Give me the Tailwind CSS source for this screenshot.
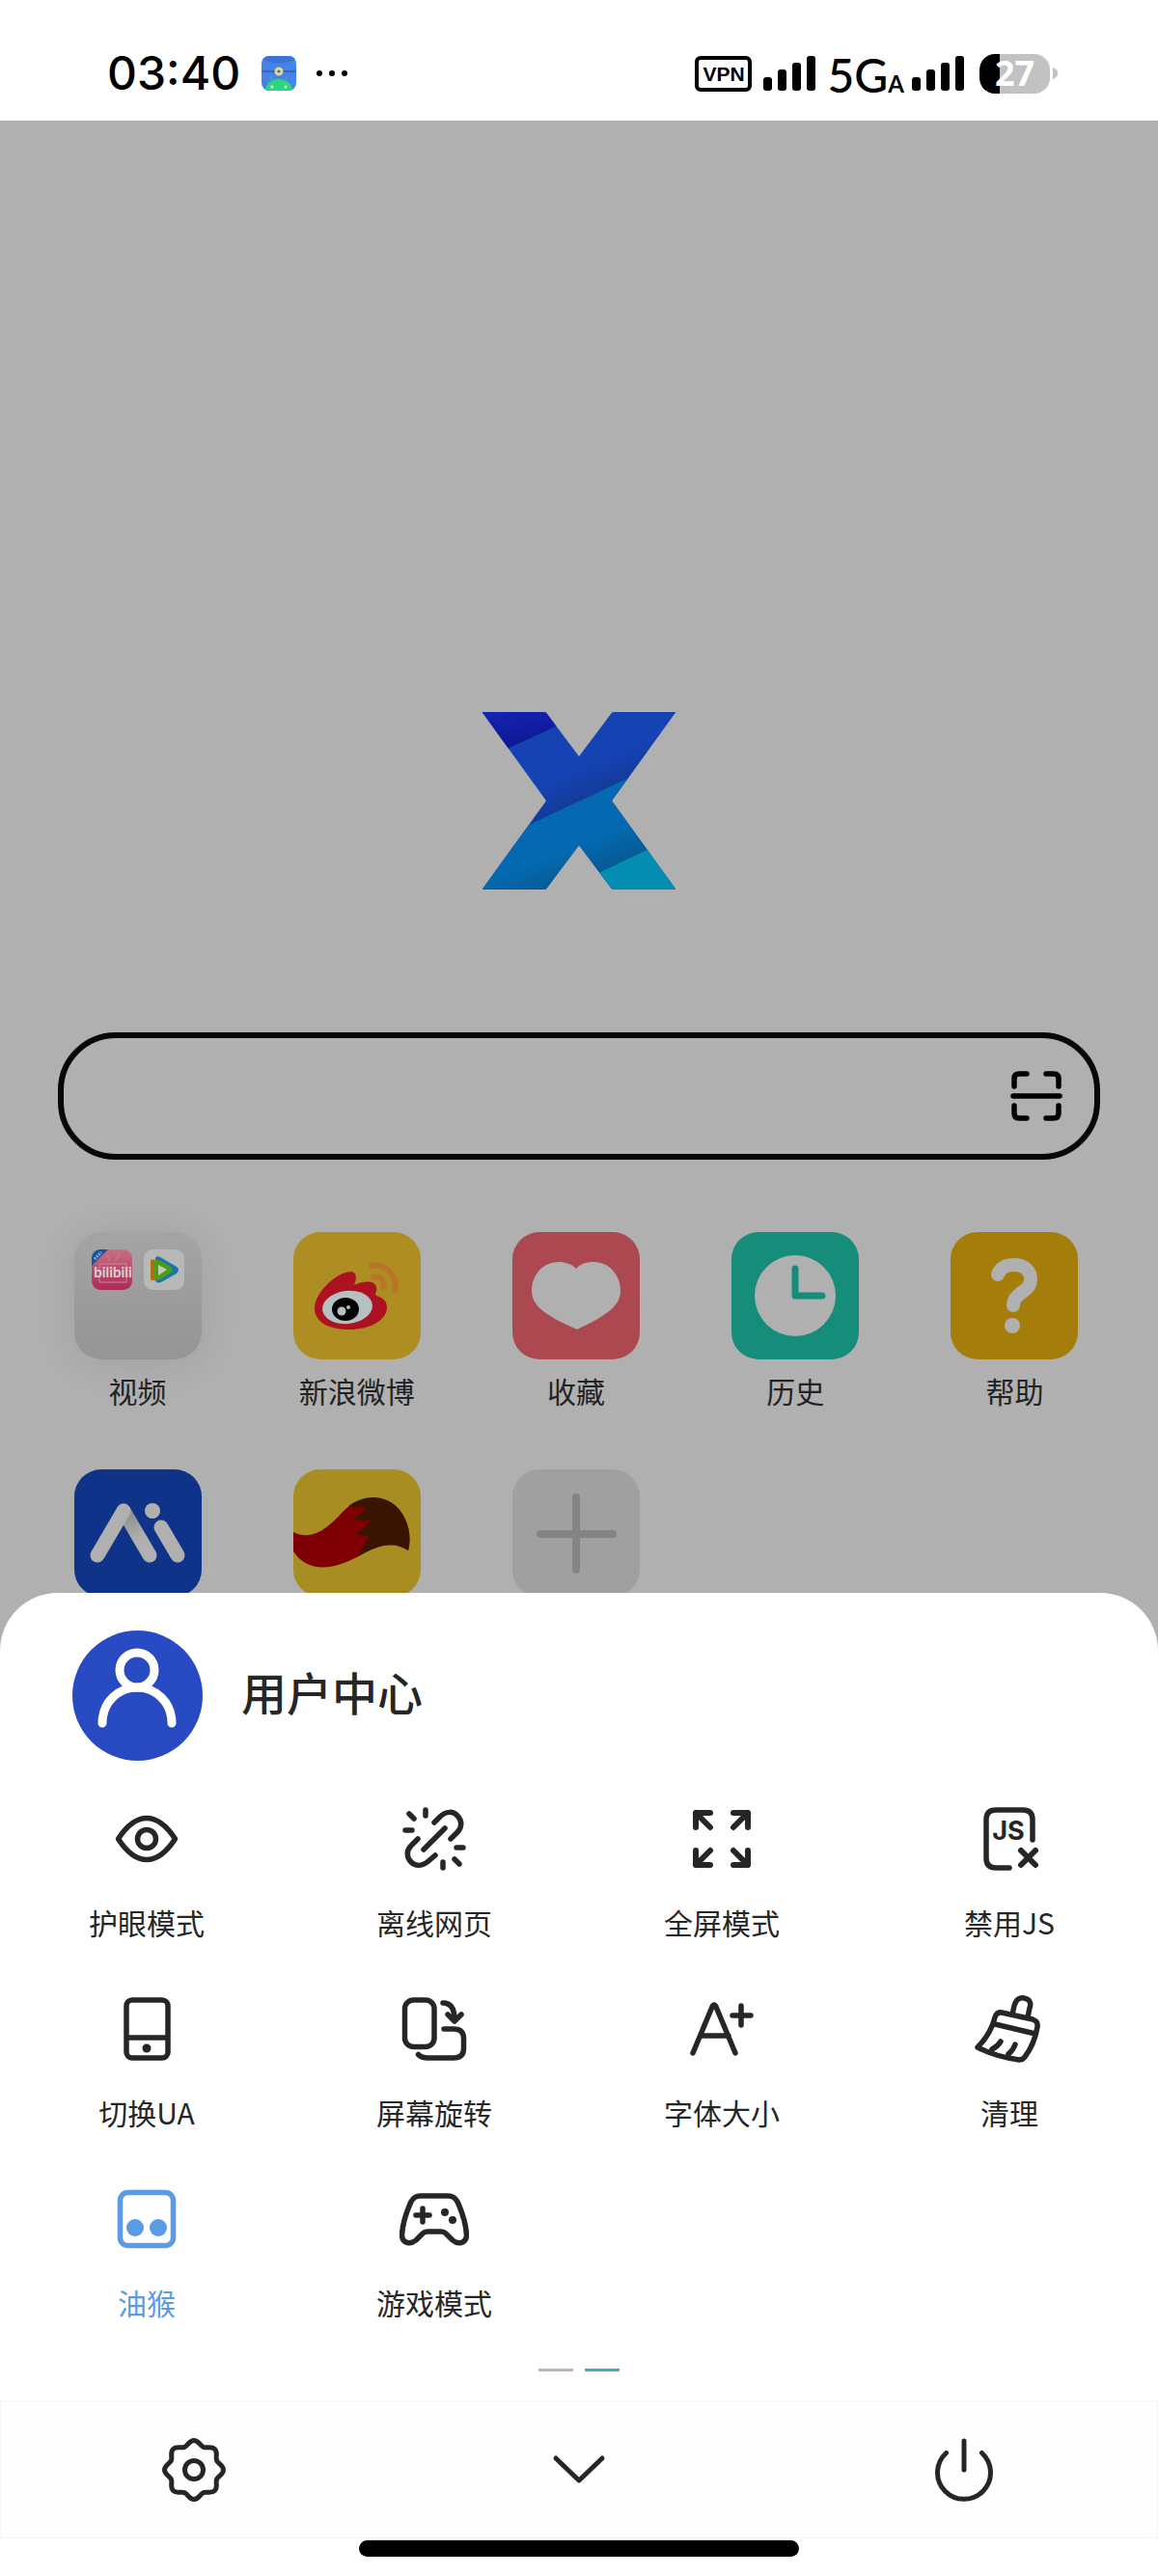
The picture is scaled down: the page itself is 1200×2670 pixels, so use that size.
<!DOCTYPE html>
<html lang="zh-CN">
<head>
<meta charset="utf-8">
<meta name="viewport" content="width=device-width, initial-scale=1">
<title>用户中心</title>
<script src="https://cdn.jsdelivr.net/npm/@tailwindcss/browser@4"></script>
</head>
<body class="relative flex min-h-screen flex-col overflow-x-hidden bg-[#b0b0b0] font-['Noto_Sans_CJK_SC',sans-serif] text-[#262626]">

<!-- Status bar -->
<header class="flex h-[125px] items-center bg-white pt-[27px] pr-[112px] pl-[111px] text-black">
  <time class="font-['Inter',sans-serif] text-[48px] leading-[50px] font-medium">03:40</time>
  <svg class="ml-[22px] size-9" viewBox="0 0 36 36" aria-hidden="true">
    <clipPath id="app"><rect width="36" height="36" rx="8"/></clipPath>
    <g clip-path="url(#app)">
      <rect width="36" height="36" fill="#4583e8"/>
      <path d="M0 0H36V3C26 9 10 9 0 3Z" fill="#3b74d6"/>
      <path d="M0 16H36" stroke="#3565bd" stroke-width="2"/>
      <path d="M4 36A14 12 0 0 1 32 36Z" fill="#2cd67c"/>
      <path d="M9 21L12 26M27 21L24 26" stroke="#3fae9c" stroke-width="1.5"/>
      <circle cx="11" cy="32" r="1.5" fill="#d8fbe8"/><circle cx="25" cy="32" r="1.5" fill="#d8fbe8"/>
      <circle cx="18" cy="16" r="3" fill="none" stroke="#e8d38a" stroke-width="3"/>
    </g>
  </svg>
  <svg class="ml-[21px] h-2 w-8" viewBox="0 0 32 8" aria-hidden="true"><circle cx="3" cy="4" r="3"/><circle cx="16" cy="4" r="3"/><circle cx="29" cy="4" r="3"/></svg>
  <div class="ml-auto flex items-center">
    <span class="flex h-[37px] w-[59px] items-center justify-center rounded-md border-4 border-black font-['Liberation_Sans',sans-serif] text-[21px] leading-none font-bold">VPN</span>
    <svg class="ml-3 h-9 w-[54px]" viewBox="0 0 54 36" aria-hidden="true"><rect y="22" width="9" height="14" rx="3"/><rect x="15" y="14" width="9" height="22" rx="3"/><rect x="30" y="7" width="9" height="29" rx="3"/><rect x="45" width="9" height="36" rx="3"/></svg>
    <span class="ml-3 flex items-baseline pt-3 font-['Lato',sans-serif] text-[48px] leading-[48px] font-medium">5G<small class="text-[24px] font-bold">A</small></span>
    <svg class="ml-2 h-9 w-[54px]" viewBox="0 0 54 36" aria-hidden="true"><rect y="22" width="9" height="14" rx="3"/><rect x="15" y="14" width="9" height="22" rx="3"/><rect x="30" y="7" width="9" height="29" rx="3"/><rect x="45" width="9" height="36" rx="3"/></svg>
    <span class="ml-4 flex h-[41px] w-[73px] items-center justify-center rounded-2xl bg-linear-to-r from-black from-29% to-[#c2c2c2] to-29% font-['Open_Sans',sans-serif] text-[36px] leading-none font-bold text-white">27</span>
    <svg class="-mr-2 ml-[3px] h-3 w-[5px]" viewBox="0 0 5 12" aria-hidden="true"><path d="M0 0C7 2 7 10 0 12Z" fill="#c2c2c2"/></svg>
  </div>
</header>

<!-- Start page behind the sheet -->
<main class="flex-1 pt-[613px]">
  <svg class="mx-auto h-[184px] w-[200px]" viewBox="0 0 200 184" role="img" aria-label="X">
    <defs>
      <clipPath id="x"><path d="M1 0H64Q66 0 67 2L100 46L133 2Q134 0 136 0H199Q201 0 199 2L134 92L199 182Q201 184 199 184H136Q134 184 133 182L100 138L67 182Q66 184 64 184H1Q-1 184 1 182L66 92L1 2Q-1 0 1 0Z"/></clipPath>
      <linearGradient id="g1" x1="0" y1="0" x2=".3" y2="1"><stop offset="0" stop-color="#1424b4"/><stop offset="1" stop-color="#0d148a"/></linearGradient>
      <linearGradient id="g2" gradientUnits="userSpaceOnUse" x1="90" y1="40" x2="112" y2="90"><stop offset=".4" stop-color="#1643b3"/><stop offset="1" stop-color="#143a98"/></linearGradient>
      <linearGradient id="g3" gradientUnits="userSpaceOnUse" x1="130" y1="105" x2="150" y2="155"><stop offset=".35" stop-color="#0469b0"/><stop offset="1" stop-color="#055a94"/></linearGradient>
    </defs>
    <g clip-path="url(#x)">
      <rect width="200" height="184" fill="url(#g2)"/>
      <path d="M0 0H66L78 14L28 37L0 50Z" fill="url(#g1)"/>
      <path d="M0 139L50 116L148 70L200 46V184H0Z" fill="url(#g3)"/>
      <path d="M122 166L172 142L200 130V184H122Z" fill="#038db0"/>
    </g>
  </svg>

  <form class="mx-[60px] mt-[148px] flex h-[132px] items-center rounded-[60px] border-6 border-[#060807] pr-[33px] pl-10">
    <input type="search" aria-label="搜索" class="h-full min-w-0 flex-1 bg-transparent text-[36px] outline-none">
    <button type="button" aria-label="扫一扫" class="size-[54px]">
      <svg class="size-full" viewBox="0 0 54 54" fill="none" stroke="#000" stroke-width="5.5" stroke-linecap="round" stroke-linejoin="round"><path d="M3 27H51M4 17V9Q4 4 9 4H17M37 4H45Q50 4 50 9V17M4 37V45Q4 50 9 50H17M37 50H45Q50 50 50 45V37"/></svg>
    </button>
  </form>

  <nav aria-label="快捷方式" class="mt-[75px] grid grid-cols-5 gap-y-[60px] pr-[35px] pl-[29px] text-center text-[30px] leading-[44px] text-[#232323]">
    <a href="#" class="flex flex-col items-center gap-2.5">
      <span class="flex size-[132px] gap-3 rounded-[28px] bg-linear-to-b from-[#a4a4a4] to-[#959595] p-[18px] shadow-[0_4px_40px_rgba(0,0,0,0.09)]">
        <svg class="size-[42px]" viewBox="0 0 42 42" aria-hidden="true">
          <clipPath id="m"><rect width="42" height="42" rx="9"/></clipPath>
          <linearGradient id="pk" x2="0" y2="1"><stop stop-color="#c86f82"/><stop offset="1" stop-color="#ab2c58"/></linearGradient>
          <g clip-path="url(#m)"><rect width="42" height="42" fill="url(#pk)"/>
          <path d="M16 6L19 12M29 5L24 12M8 15H36V34H8Z" fill="none" stroke="#cf8596"/>
          <path d="M0 0H17L0 17Z" fill="#17559c"/><path d="M3 10L10 3" stroke="#7fa8cf" stroke-width="3" stroke-dasharray="2 1"/>
          <text x="22" y="29" text-anchor="middle" font-family="Lato" font-size="15" font-weight="700" fill="#d8cfd2">bilibili</text></g>
        </svg>
        <svg class="size-[42px]" viewBox="0 0 42 42" aria-hidden="true">
          <rect width="42" height="42" rx="9" fill="#b8b8b8"/>
          <path d="M7 13Q7 9 11 11L22 18V25L11 32Q7 33 7 29Z" fill="#b66a12"/>
          <path d="M12 10Q12 6 17 8L34 18Q38 21 34 25L18 34Q12 36 12 31Z" fill="#1c74ad"/>
          <path d="M11 13Q12 9 17 12L28 18Q31 21 28 24L17 31Q11 33 11 28Z" fill="#4f9e12"/>
          <path d="M15 16V27L24 21Z" fill="#c4cdbb"/>
        </svg>
      </span>视频</a>
    <a href="#" class="flex flex-col items-center gap-2.5">
      <svg class="size-[132px] rounded-[28px] bg-[#ae8e22]" viewBox="0 0 132 132" aria-hidden="true">
        <path d="M22 79C22 63 44 42 59 41C66 41 66 48 63 55C73 50 86 50 86 58C87 62 84 64 86 66C93 68 97 72 97 78C97 92 78 101 58 101C38 101 22 94 22 79Z" fill="#ad1222"/>
        <ellipse cx="56" cy="78" rx="26" ry="17" transform="rotate(-6 56 78)" fill="#b5c1c1"/>
        <ellipse cx="54" cy="80" rx="14" ry="12" fill="#020202"/><circle cx="50" cy="82" r="4.5" fill="#b5c1c1"/><circle cx="57" cy="78" r="2" fill="#b5c1c1"/>
        <path d="M81 35C96 32 109 46 105 61M83 47C90 45 96 51 93 57" fill="none" stroke="#ba7427" stroke-width="6" stroke-linecap="round"/>
      </svg>新浪微博</a>
    <a href="#" class="flex flex-col items-center gap-2.5">
      <svg class="size-[132px] rounded-[28px] bg-[#ab4850]" viewBox="0 0 132 132" aria-hidden="true">
        <path d="M66 38C71 32 78 31 84 31C101 31 112 45 112 61C112 78 94 88 67 101C38 88 20 78 20 61C20 45 31 31 48 31C55 31 61 33 66 38Z" fill="#b0b0b0"/>
      </svg>收藏</a>
    <a href="#" class="flex flex-col items-center gap-2.5">
      <svg class="size-[132px] rounded-[28px] bg-[#158d7a]" viewBox="0 0 132 132" aria-hidden="true">
        <circle cx="66" cy="66" r="42" fill="#b0b0b0"/><path d="M66 38V66H94" fill="none" stroke="#158d7a" stroke-width="7" stroke-linecap="round" stroke-linejoin="round"/>
      </svg>历史</a>
    <a href="#" class="flex flex-col items-center gap-2.5">
      <svg class="size-[132px] rounded-[28px] bg-[#a47d0b]" viewBox="0 0 132 132" aria-hidden="true">
        <path d="M49 44C52 36 59 34 66 34C76 34 83 40 83 49C83 63 65 62 65 76" fill="none" stroke="#b0b0b0" stroke-width="14" stroke-linecap="round"/><circle cx="64" cy="97" r="8" fill="#b0b0b0"/>
      </svg>帮助</a>
    <a href="#" aria-label="AI" class="flex flex-col items-center">
      <svg class="size-[132px] rounded-[28px] bg-[#10338a]" viewBox="0 0 132 132" aria-hidden="true">
        <defs><linearGradient id="sh" gradientUnits="userSpaceOnUse" x1="52" y1="50" x2="70" y2="84"><stop stop-color="#919191"/><stop offset=".7" stop-color="#b0b0b0"/></linearGradient></defs>
        <g fill="none" stroke="#b0b0b0" stroke-width="15" stroke-linecap="round"><path d="M51 43L78 89" stroke="url(#sh)"/><path d="M24 89L51 43M90 60L107 89"/></g><circle cx="81" cy="43" r="8" fill="#b0b0b0"/>
      </svg></a>
    <a href="#" aria-label="Fox" class="flex flex-col items-center">
      <svg class="size-[132px] rounded-[28px] bg-[#a88e22]" viewBox="0 0 132 132" aria-hidden="true">
        <path d="M0 65C22 76 40 56 52 43C72 24 98 27 110 42C119 53 123 70 119 84C104 74 89 78 73 87C44 104 16 109 0 85Z" fill="#7f0004"/>
        <path d="M57 38C76 24 98 27 110 42C119 53 123 70 119 84C104 74 89 78 69 89Q71 81 79 70Q72 70 65 67Q75 61 80 53Q72 54 63 52Q70 46 75 39Q67 40 57 38Z" fill="#371500"/>
      </svg></a>
    <a href="#" aria-label="添加" class="flex flex-col items-center">
      <svg class="size-[132px] rounded-[28px] bg-[#a0a0a0]" viewBox="0 0 132 132" aria-hidden="true">
        <path d="M66 29V104M29 67H104" stroke="#848484" stroke-width="8" stroke-linecap="round"/>
      </svg></a>
  </nav>
</main>

<!-- Menu sheet -->
<section aria-label="菜单" class="absolute inset-x-0 bottom-0 flex flex-col rounded-t-[60px] bg-white pt-[39px]">
  <a href="#" class="flex items-center gap-10 px-[75px]">
    <svg class="size-[135px] rounded-full bg-[#284bc3]" viewBox="0 0 135 135" fill="none" stroke="#fff" stroke-width="9" stroke-linecap="round" aria-hidden="true"><circle cx="67" cy="41" r="18"/><path d="M31 96C31 75 47 59 67 59S103 75 103 96"/></svg>
    <h1 class="pb-2.5 text-[47px] leading-[60px] font-medium">用户中心</h1>
  </a>

  <div class="mt-[45px] grid grid-cols-4 gap-y-[53px] pr-[5px] pl-[3px] text-[30px] leading-[44px]">
    <button class="flex flex-col items-center gap-7">
      <svg class="size-[72px]" viewBox="0 0 72 72" fill="none" stroke="currentColor" stroke-width="5.500" stroke-linejoin="round" aria-hidden="true"><path d="M6.500 36C13 26 23 14.500 36 14.500S59 26 65.500 36C59 46 49 57.500 36 57.500S13 46 6.500 36Z"/><circle cx="36" cy="36" r="9.500"/></svg>护眼模式</button>
    <button class="flex flex-col items-center gap-7">
      <svg class="size-[72px]" viewBox="0 0 72 72" fill="none" stroke="currentColor" stroke-width="5.500" stroke-linecap="round" stroke-linejoin="round" aria-hidden="true"><path d="M10 10L15 15M27 6V12M6 27H13M59 45H66M45 60V66M57 57L62 62M25 47L47 25M36 19L42 13C48 7 56 7 60 12C65 17 65 24 60 29L53 36M19 36L12 43C7 48 7 55 12 60C17 65 24 64 30 59L37 53"/></svg>离线网页</button>
    <button class="flex flex-col items-center gap-7">
      <svg class="size-[72px]" viewBox="0 0 72 72" fill="none" stroke="currentColor" stroke-width="6" stroke-linecap="round" stroke-linejoin="round" aria-hidden="true"><path d="M9 24V9H24M9 9L24 24M48 9H63V24M63 9L48 24M9 48V63H24M9 63L24 48M63 48V63H48M63 63L48 48"/></svg>全屏模式</button>
    <button class="flex flex-col items-center gap-7">
      <svg class="size-[72px]" viewBox="0 0 72 72" fill="none" stroke="currentColor" stroke-width="5.500" stroke-linecap="round" stroke-linejoin="round" aria-hidden="true"><path d="M60 37V16Q60 6 50 6H22Q12 6 12 16V56Q12 66 22 66H36"/><path d="M48 48L63 63M63 48L48 63" stroke-width="6"/><text x="35" y="37" text-anchor="middle" font-family="Inter" font-size="27" font-weight="700" fill="currentColor" stroke="none">JS</text></svg>禁用JS</button>
    <button class="flex flex-col items-center gap-7">
      <svg class="size-[72px]" viewBox="0 0 72 72" fill="none" stroke="currentColor" stroke-width="5.500" aria-hidden="true"><rect x="15" y="6" width="43" height="60" rx="6"/><path d="M15 45H58"/><circle cx="36" cy="56" r="4.500" fill="currentColor" stroke="none"/></svg>切换UA</button>
    <button class="flex flex-col items-center gap-7">
      <svg class="size-[72px]" viewBox="0 0 72 72" fill="none" stroke="currentColor" stroke-width="5.500" stroke-linecap="round" stroke-linejoin="round" aria-hidden="true"><rect x="5.500" y="6" width="30.500" height="48.500" rx="9"/><path d="M45 9C53 9 57 15 57 26M50 21L57 28L64 21M46 36H56C63 36 66.500 39 66.500 46V56C66.500 63 63 66 56 66H29C24 66 22 65 19.500 62.500"/></svg>屏幕旋转</button>
    <button class="flex flex-col items-center gap-7">
      <svg class="size-[72px]" viewBox="0 0 72 72" fill="none" stroke="currentColor" stroke-width="5.500" stroke-linecap="round" stroke-linejoin="round" aria-hidden="true"><path d="M6 61L26 13Q28 9 30 13L50 61M14 43H43"/><path d="M47 22H66M56 12V32"/></svg>字体大小</button>
    <button class="flex flex-col items-center gap-7">
      <svg class="size-[72px]" viewBox="0 0 72 72" fill="none" stroke="currentColor" stroke-width="5.500" stroke-linecap="round" stroke-linejoin="round" aria-hidden="true"><path d="M39 21L41 12C43 5 47 3 51 4C57 5 59 9 57 14L55 24M28 19L60 26Q66 28 65 34C63 46 58 57 52 65Q50 68 46 68C31 66 16 62 3 55C12 46 18 36 21 24Q23 18 28 19ZM21 31L63 41M27 49Q24 54 18 57M42 52Q40 58 35 62"/></svg>清理</button>
    <button aria-pressed="true" class="flex flex-col items-center gap-7 text-[#5b9ae4]">
      <svg class="size-[72px]" viewBox="0 0 72 72" fill="none" stroke="currentColor" stroke-width="5.500" aria-hidden="true"><rect x="8.500" y="8.500" width="55" height="55" rx="8"/><g fill="currentColor" stroke="none"><circle cx="24" cy="45" r="9"/><circle cx="48" cy="45" r="9"/></g></svg>油猴</button>
    <button class="flex flex-col items-center gap-7">
      <svg class="size-[72px]" viewBox="0 0 72 72" fill="none" stroke="currentColor" stroke-width="5.500" stroke-linecap="round" stroke-linejoin="round" aria-hidden="true"><path d="M22 12H50Q57 12 60 18C65 29 69 41 69.500 53C69 61 61 63 55 58L48 51Q46 49 43 49H29Q26 49 24 51L17 58C11 63 3 61 2.500 53C3 41 7 29 12 18Q15 12 22 12ZM17 32H31M24 25V39"/><g fill="currentColor" stroke="none"><circle cx="47" cy="29" r="4"/><circle cx="55" cy="37" r="4"/></g></svg>游戏模式</button>
  </div>

  <div class="mt-[47px] mb-[30px] flex justify-center gap-3" aria-hidden="true">
    <span class="h-[3px] w-9 bg-[#b8b8b8]"></span><span class="h-[3px] w-9 bg-[#4ba8c6]"></span>
  </div>

  <div class="grid h-[143px] grid-cols-3 place-items-center border border-[#f6f6f6] bg-[#fefefe]">
    <button aria-label="设置"><svg class="size-[72px]" viewBox="0 0 72 72" fill="none" stroke="currentColor" stroke-width="5" stroke-linejoin="round"><path d="M66.500 36C66.500 41 61.100 42.100 59.600 45.800C58.100 49.500 61.100 54.100 57.600 57.600C54.100 61.100 49.500 58.100 45.800 59.600C42.100 61.100 41 66.500 36 66.500C31 66.500 29.900 61.100 26.200 59.600C22.500 58.100 17.900 61.100 14.400 57.600C10.900 54.100 13.900 49.500 12.400 45.800C10.900 42.100 5.500 41 5.500 36C5.500 31 10.900 29.900 12.400 26.200C13.900 22.500 10.900 17.900 14.400 14.400C17.900 10.900 22.500 13.900 26.200 12.400C29.900 10.900 31 5.500 36 5.500C41 5.500 42.100 10.900 45.800 12.400C49.500 13.900 54.100 10.900 57.600 14.400C61.100 17.900 58.100 22.500 59.600 26.200C61.100 29.900 66.500 31 66.500 36Z"/><circle cx="36" cy="36" r="9.500"/></svg></button>
    <button aria-label="收起"><svg class="size-[72px]" viewBox="0 0 72 72" fill="none" stroke="currentColor" stroke-width="5" stroke-linecap="round" stroke-linejoin="round"><path d="M12 24L36 47L60 24"/></svg></button>
    <button aria-label="退出"><svg class="size-[72px]" viewBox="0 0 72 72" fill="none" stroke="currentColor" stroke-width="5" stroke-linecap="round"><path d="M36 6V36M17.500 18.500A27.500 27.500 0 1 0 54.500 18.500"/></svg></button>
  </div>
  <div class="mx-auto mt-0.5 mb-5 h-[17px] w-[38%] rounded-full bg-black"></div>
</section>
</body>
</html>
